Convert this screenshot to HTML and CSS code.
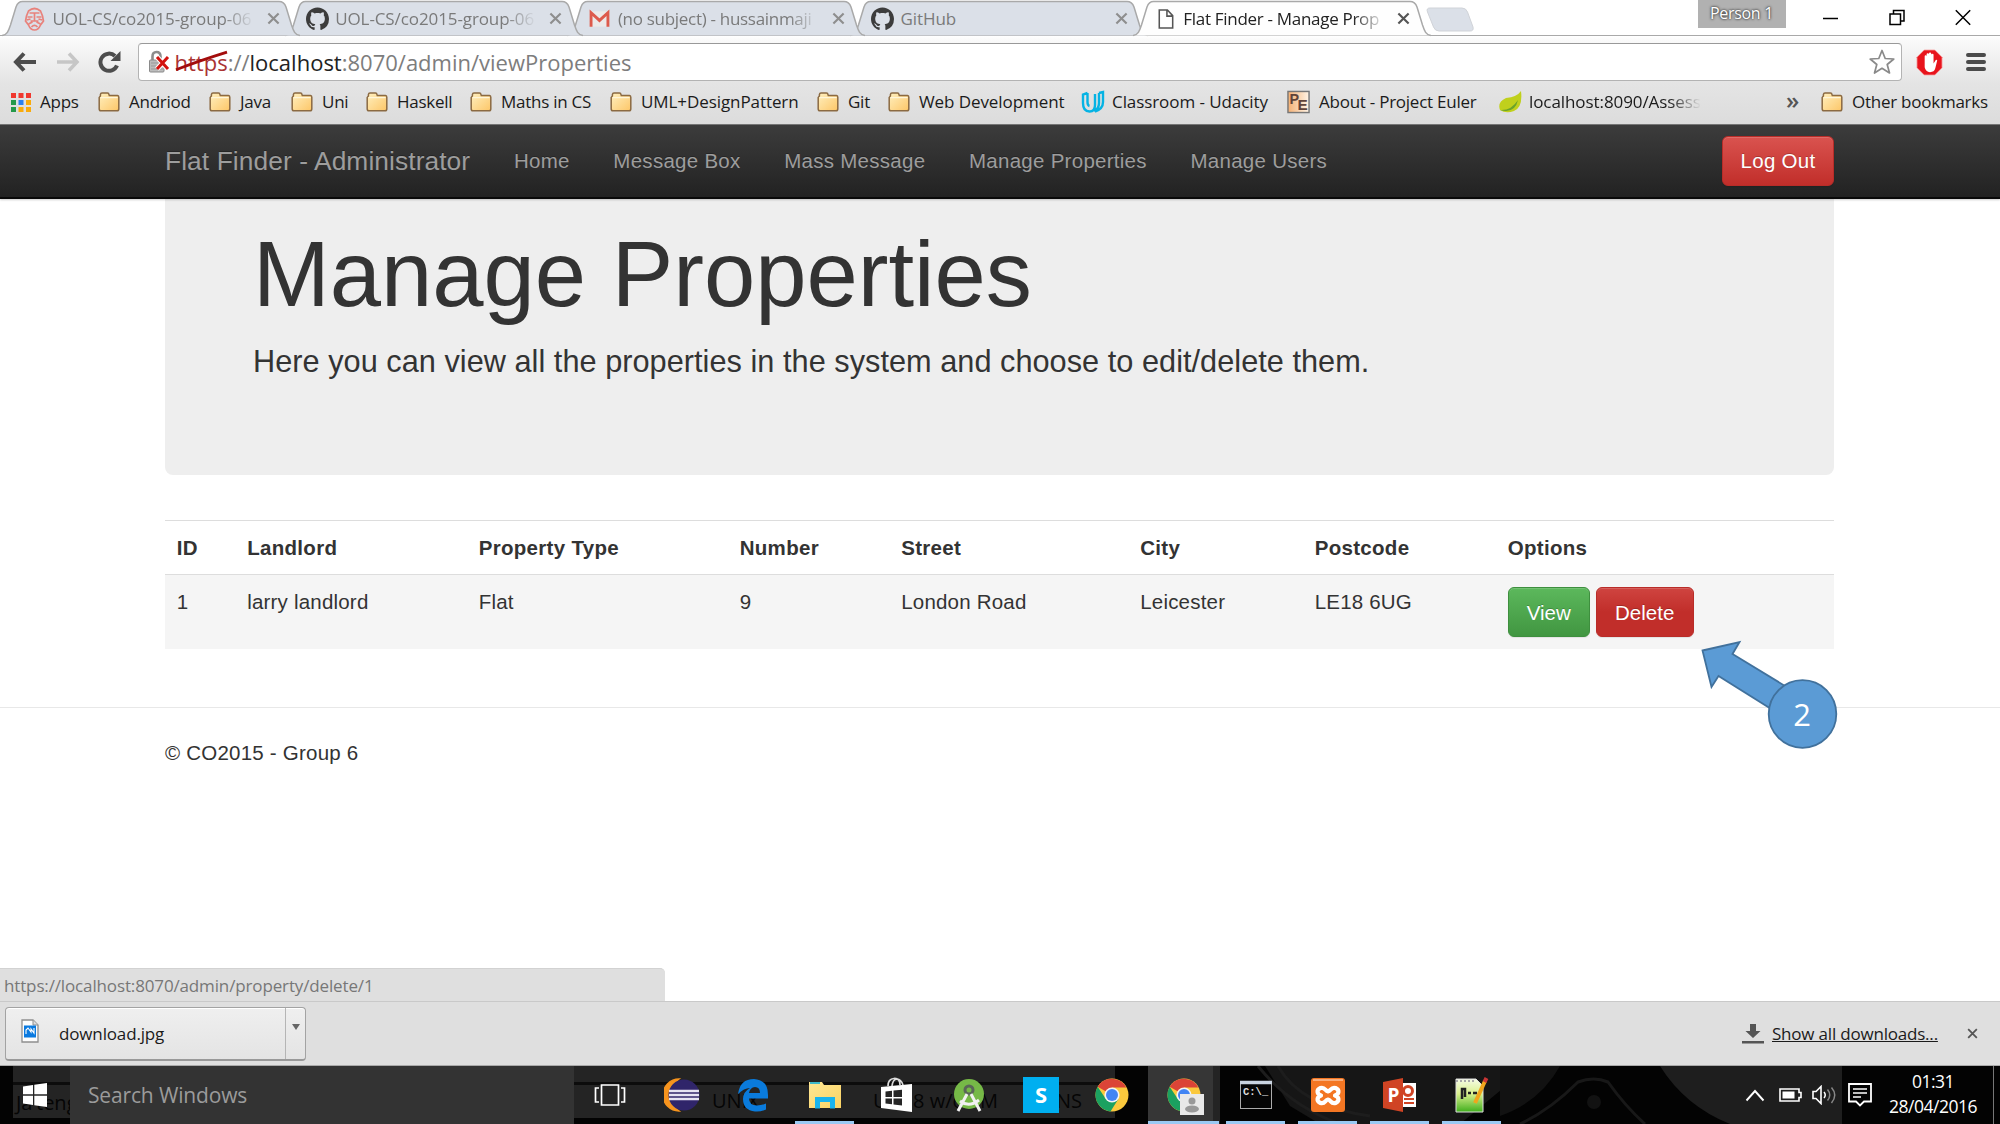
FILE: index.html
```html
<!DOCTYPE html>
<html lang="en">
<head>
<meta charset="utf-8">
<title>Flat Finder - Manage Properties</title>
<link rel="stylesheet" href="styles.css">
</head>
<body>
<svg class="defs" width="0" height="0" aria-hidden="true">
  <defs>
    <linearGradient id="folderFill" x1="0" y1="0" x2="1" y2="1"><stop offset="0" stop-color="#fff0c0"/><stop offset="1" stop-color="#fdc667"/></linearGradient>
    <linearGradient id="peFill" x1="0" y1="0" x2="1" y2="0"><stop offset="0" stop-color="#f4b074"/><stop offset="1" stop-color="#fff4e6"/></linearGradient>
    <linearGradient id="nppFill" x1="0" y1="0" x2="0" y2="1"><stop offset="0" stop-color="#f6fbe6"/><stop offset="0.45" stop-color="#d9f08c"/><stop offset="1" stop-color="#3fae1c"/></linearGradient>
    <linearGradient id="explFill" x1="0" y1="0" x2="1" y2="1"><stop offset="0" stop-color="#ffe794"/><stop offset="1" stop-color="#fbd363"/></linearGradient>
    <symbol id="folder" viewBox="0 0 22 20"><path d="M1.2 17V5.5L2.4 4V2.6Q2.6 1 4 1H9.5Q10.8 1 11 2.6L11.3 3.6H19.5Q20.8 3.8 20.8 5.3V17Q20.8 18.8 19 18.8H3Q1.2 18.8 1.2 17Z" fill="url(#folderFill)" stroke="#8b6a42" stroke-width="1.5"/><path d="M2.4 5.6H19.6" stroke="#fff6da" stroke-width="1.2"/></symbol>
    <symbol id="cat" viewBox="0 0 16 16"><path fill-rule="evenodd" fill="#3c3c3c" d="M8 0C3.58 0 0 3.58 0 8c0 3.54 2.29 6.53 5.47 7.59.4.07.55-.17.55-.38 0-.19-.01-.82-.01-1.49-2.01.37-2.53-.49-2.69-.94-.09-.23-.48-.94-.82-1.13-.28-.15-.68-.52-.01-.53.63-.01 1.08.58 1.23.82.72 1.21 1.87.87 2.33.66.07-.52.28-.87.51-1.07-1.78-.2-3.64-.89-3.64-3.95 0-.87.31-1.59.82-2.15-.08-.2-.36-1.02.08-2.12 0 0 .67-.21 2.2.82.64-.18 1.32-.27 2-.27s1.36.09 2 .27c1.53-1.04 2.2-.82 2.2-.82.44 1.1.16 1.92.08 2.12.51.56.82 1.27.82 2.15 0 3.07-1.87 3.75-3.65 3.95.29.25.54.73.54 1.48 0 1.07-.01 1.93-.01 2.2 0 .21.15.46.55.38A8.01 8.01 0 0 0 16 8c0-4.42-3.58-8-8-8z"/></symbol>
    <symbol id="cross" viewBox="0 0 14 14"><path d="M1.5 1.5 12.5 12.5M12.5 1.5 1.5 12.5" fill="none" stroke="currentColor" stroke-width="2.3"/></symbol>
    <symbol id="tabshape" viewBox="0 0 298 37"><path d="M0 35.5C5 35 6.500 31 8.500 25L14 7Q16 1.500 20.500 1.500H277Q282 1.500 284 7L289.500 25C291.500 31 293 35 298 35.500" stroke="#a9a9a9" stroke-width="1.500"/></symbol>
    <symbol id="chrome" viewBox="0 0 34 34"><circle cx="17" cy="17" r="16.500" fill="#fbc93d"/><path d="M17 17 2.700 8.700A16.500 16.500 0 0 1 31.300 9.500H17Z" fill="#db4437"/><path d="M2.700 8.700A16.500 16.500 0 0 0 15.500 33.400L23.500 20.800 17 17 10.500 20.500Z" fill="#1ba160"/><circle cx="17" cy="17" r="7.600" fill="#f4f4f4"/><circle cx="17" cy="17" r="6" fill="#4285f4"/></symbol>
  </defs>
</svg>

<header class="chrome">
  <div class="tabstrip">
    <div class="tab t1">
      <svg class="shape"><use href="#tabshape"/></svg>
      <svg class="fav" viewBox="0 0 20 24"><g fill="none" stroke="#e8827c" stroke-width="1.700"><path d="M4 4Q10-1 16 4L18 9 19 14 16 18Q14 23 10 23T4 18L1 14 2 9Z"/><path d="M5 6H15M3 10H8M12 10H17M10 6V14M6 14H14M4 17 8 15M16 17 12 15M7 20Q10 17 13 20M2 13 6 12M18 13 14 12"/></g></svg>
      <span class="label fade">UOL-CS/co2015-group-06</span><svg class="x"><use href="#cross"/></svg>
    </div>
    <div class="tab t2">
      <svg class="shape"><use href="#tabshape"/></svg>
      <svg class="fav"><use href="#cat"/></svg>
      <span class="label fade">UOL-CS/co2015-group-06</span><svg class="x"><use href="#cross"/></svg>
    </div>
    <div class="tab t3">
      <svg class="shape"><use href="#tabshape"/></svg>
      <svg class="fav" viewBox="0 0 24 24"><path d="M2 4H22V20H2Z" fill="#ece9e9"/><path d="M3.200 20V5.500L12 13.500 20.800 5.500V20" fill="none" stroke="#dd5a4c" stroke-width="3"/></svg>
      <span class="label fade">(no subject) - hussainmaji</span><svg class="x"><use href="#cross"/></svg>
    </div>
    <div class="tab t4">
      <svg class="shape"><use href="#tabshape"/></svg>
      <svg class="fav"><use href="#cat"/></svg>
      <span class="label">GitHub</span><svg class="x"><use href="#cross"/></svg>
    </div>
    <div class="tab t5 active">
      <svg class="shape"><use href="#tabshape"/></svg>
      <svg class="fav" viewBox="0 0 24 24"><path d="M5.500 2.500H14L19.500 8.500V21.500H5.500ZM13.500 2.500V9H19.500" fill="#fff" stroke="#555" stroke-width="1.600"/></svg>
      <span class="label fade">Flat Finder - Manage Prop</span><svg class="x"><use href="#cross"/></svg>
    </div>
    <svg class="newtab" viewBox="0 0 49 25"><path d="M4 1H36Q40 1 41.500 5L47 20Q48 24 44 24H13Q9 24 7.500 20L1.500 5Q0 1 4 1Z" fill="#dbe0e8" stroke="#d0d3d8"/></svg>
    <div class="person">Person 1</div>
    <div class="wincontrols">
      <svg viewBox="0 0 16 16"><path d="M0 9H15" stroke="#000" stroke-width="1.500"/></svg>
      <svg viewBox="0 0 16 16"><path d="M1 4.500H11.500V15H1ZM4.500 4V1H15V11.500H12" fill="none" stroke="#000" stroke-width="1.500"/></svg>
      <svg viewBox="0 0 16 16"><path d="M.8.8 15.200 15.200M15.200.8.8 15.200" stroke="#000" stroke-width="1.500"/></svg>
    </div>
  </div>

  <div class="toolbar">
    <svg class="nav-ic" viewBox="0 0 24 22"><path d="M23 11H4M11 2.500 3 11 11 19.500" fill="none" stroke="#4d4d4d" stroke-width="4"/></svg>
    <svg class="nav-ic off" viewBox="0 0 24 22"><path d="M1 11H20M13 2.500 21 11 13 19.500" fill="none" stroke="#c6c6c6" stroke-width="3.500"/></svg>
    <svg class="nav-ic" viewBox="0 0 24 22"><path d="M19 14.500A8.600 8.600 0 1 1 17 5" fill="none" stroke="#4d4d4d" stroke-width="4"/><path d="M22.500 0V10H12.500Z" fill="#4d4d4d"/></svg>
    <div class="omnibox">
      <svg class="lock" viewBox="0 0 22 24"><path d="M4.500 11V6.500Q4.500 2 8.500 2T12.500 6.500V11" fill="none" stroke="#8c8c8c" stroke-width="2.600"/><rect x="1.500" y="10" width="14.500" height="12" rx="1" fill="#bcbcbc" stroke="#8a8a8a"/><path d="M3 13H15M3 16H15M3 19H15" stroke="#999"/><path d="M9 7 20 19M20 7 9 19" stroke="#fff" stroke-width="5"/><path d="M9 7 20 19M20 7 9 19" stroke="#d2120e" stroke-width="3"/></svg>
      <span class="url"><span class="scheme">https<svg viewBox="0 0 54 22"><path d="M1 20Q24 11 53 2" fill="none" stroke="#a30c0c" stroke-width="2.800"/></svg></span>://<b>localhost</b>:8070/admin/viewProperties</span>
      <svg class="star" viewBox="0 0 28 28"><path d="M14 2.500 17.200 10.500 25.800 11 19.200 16.500 21.500 25 14 20.300 6.500 25 8.800 16.500 2.200 11 10.800 10.500Z" fill="#fff" stroke="#8a8a8a" stroke-width="1.700" stroke-linejoin="round"/></svg>
    </div>
    <svg class="abp" viewBox="0 0 28 28"><path d="M8.500 1H19.500L27 8.500V19.500L19.500 27H8.500L1 19.500V8.500Z" fill="#e8141c" stroke="#f7a5a5" stroke-width=".8"/><path d="M9 13V7.500Q9 6.500 10 6.500T11 7.500V5.500Q11 4.300 12.200 4.300T13.400 5.500V4.800Q13.400 3.500 14.600 3.500T15.800 4.800V6Q15.800 5 17 5T18.200 6V15L20.500 11.500Q21.800 10.500 22 12L20 20Q19 24 14.500 24T9 19Z" fill="#fff"/></svg>
    <svg class="burger" viewBox="0 0 20 20"><path d="M2 3H18M2 10H18M2 17H18" stroke="#4b4b4b" stroke-width="4" stroke-linecap="round"/></svg>
  </div>

  <div class="bookmarks">
    <div class="bm"><svg viewBox="0 0 20 20" width="20" height="20"><path d="M0 1H5V6H0ZM7.500 1H12.500V6H7.500ZM15 1H20V6H15Z" fill="#f0372e"/><path d="M0 8H5V13H0ZM0 15H5V20H0Z" fill="#24994a"/><path d="M7.500 8H12.500V13H7.500Z" fill="#2a80f0"/><path d="M15 8H20V13H15ZM7.500 15H12.500V20H7.500ZM15 15H20V20H15Z" fill="#f9ab0c"/></svg><span>Apps</span></div>
    <div class="bm"><svg class="fold"><use href="#folder"/></svg><span>Andriod</span></div>
    <div class="bm"><svg class="fold"><use href="#folder"/></svg><span>Java</span></div>
    <div class="bm"><svg class="fold"><use href="#folder"/></svg><span>Uni</span></div>
    <div class="bm"><svg class="fold"><use href="#folder"/></svg><span>Haskell</span></div>
    <div class="bm"><svg class="fold"><use href="#folder"/></svg><span>Maths in CS</span></div>
    <div class="bm wide"><svg class="fold"><use href="#folder"/></svg><span>UML+DesignPattern</span></div>
    <div class="bm"><svg class="fold"><use href="#folder"/></svg><span>Git</span></div>
    <div class="bm wide"><svg class="fold"><use href="#folder"/></svg><span>Web Development</span></div>
    <div class="bm tight wide"><svg viewBox="0 0 24 24" width="24" height="24"><path d="M6.500 3 2 4.500V13Q2 21.500 8.500 21.500 14 21.500 14 15V4M6.500 3V12Q6.500 15.500 8.500 16M18 3V13Q18 19 13 20.500M18 3 22 2V12Q22 19 14 21.500" fill="none" stroke="#05b3e4" stroke-width="2.400"/></svg><span>Classroom - Udacity</span></div>
    <div class="bm"><svg viewBox="0 0 24 24" width="23" height="24"><rect x="1" y="1" width="22" height="22" fill="url(#peFill)" stroke="#777" stroke-width="1.500"/><text x="2.500" y="14.500" font-family="Liberation Sans, sans-serif" font-weight="700" font-size="15" fill="#60443a">P</text><text x="11" y="20.500" font-family="Liberation Sans, sans-serif" font-weight="700" font-size="16" fill="#60443a">E</text></svg><span>About - Project Euler</span></div>
    <div class="bm tight wide"><svg viewBox="0 0 24 24" width="24" height="24"><path d="M23 1Q25 17 16 21 8 24 2 20 -1 12 8 8 19 7 23 1Z" fill="#c0d01c"/><path d="M2 20Q13 21 20 10 17 24 2 20Z" fill="#6aa32a"/></svg><span class="fade">localhost:8090/Assess</span></div>
    <div class="more">»</div>
    <div class="bm other"><svg class="fold"><use href="#folder"/></svg><span>Other bookmarks</span></div>
  </div>
</header>

<main class="page">
  <nav class="navbar">
    <div class="container">
      <a class="brand">Flat Finder - Administrator</a>
      <a>Home</a><a>Message Box</a><a>Mass Message</a><a>Manage Properties</a><a>Manage Users</a>
      <a class="btn danger logout">Log Out</a>
    </div>
  </nav>
  <section class="jumbotron container">
    <h1>Manage Properties</h1>
    <p>Here you can view all the properties in the system and choose to edit/delete them.</p>
  </section>
  <table class="container listing">
    <colgroup><col class="c1"><col class="c2"><col class="c3"><col class="c4"><col class="c5"><col class="c6"><col class="c7"><col></colgroup>
    <thead><tr><th>ID</th><th>Landlord</th><th>Property Type</th><th>Number</th><th>Street</th><th>City</th><th>Postcode</th><th>Options</th></tr></thead>
    <tbody><tr><td>1</td><td>larry landlord</td><td>Flat</td><td>9</td><td>London Road</td><td>Leicester</td><td>LE18 6UG</td>
      <td><div class="actions"><a class="btn success">View</a><a class="btn danger hover">Delete</a></div></td></tr></tbody>
  </table>
  <footer><div class="container">© CO2015 - Group 6</div></footer>
  <svg class="callout" viewBox="0 0 140 110"><path d="M2.500 10.500 39.500 2 32.500 14 90 49 76 72 18.500 36 11.500 47Z" fill="#5b9bd5" stroke="#41719c" stroke-width="1.800"/><circle cx="102.500" cy="74" r="33.800" fill="#5b9bd5" stroke="#41719c" stroke-width="1.800"/><text x="102" y="86" text-anchor="middle" class="num">2</text></svg>
  <div class="status">https://localhost:8070/admin/property/delete/1</div>
</main>

<div class="shelf">
  <div class="dl">
    <div class="file"><svg viewBox="0 0 18 24" width="18" height="24"><path d="M1 1H12L17 6V23H1Z" fill="#fdfdfd" stroke="#8f8f8f" stroke-width="1.300"/><path d="M12 1V6H17" fill="#ddd" stroke="#8f8f8f"/><rect x="3" y="6.500" width="12" height="12" fill="#0a7ae0"/><path d="M5 15V11L7 9 10 13V10L13 14V9" fill="none" stroke="#fff" stroke-width="1.100"/></svg><span>download.jpg</span></div>
    <div class="drop"><svg viewBox="0 0 8 6" width="8" height="6"><path d="M0 0H8L4 6Z" fill="#666"/></svg></div>
  </div>
  <svg class="arrow" viewBox="0 0 22 20" width="22" height="20"><path d="M8 0H14V7H18.500L11 14 3.500 7H8ZM0 17H22V19.500H0Z" fill="#555"/></svg>
  <a class="all">Show all downloads...</a>
  <svg class="x"><use href="#cross"/></svg>
</div>

<div class="taskbar">
  <svg class="backdrop" viewBox="0 0 2000 58">
    <rect width="2000" height="58" fill="#030303"/>
    <rect x="13" width="1102" height="52" fill="#242424"/><rect x="13" y="16" width="1102" height="3" fill="#0c0c0c"/>
    <path d="M1265 0H1530L1460 58H1320L1290 40Z" fill="#161616"/><path d="M1258 0Q1290 40 1340 58M1278 0Q1300 40 1370 50" fill="none" stroke="#1d1d1d" stroke-width="3"/>
    <path d="M1660 0H1842V58H1730Q1685 40 1660 0Z" fill="#1e1e1e"/><path d="M1500 0H1560Q1540 36 1500 50Z" fill="#121212"/><path d="M1520 58Q1550 44 1578 16 1594 10 1608 16 1625 40 1645 58" fill="none" stroke="#181818" stroke-width="3"/><circle cx="1594" cy="36" r="7" fill="#121212"/>
    <g class="ghost"><text x="16" y="44">Ja</text><text x="36" y="44">teng</text><text x="712" y="42">UNIX</text><text x="873" y="42">U</text><text x="913" y="42">8 w/o</text><text x="980" y="42">M</text><text x="1056" y="42">NS</text></g>
  </svg>
  <div class="start"><svg viewBox="0 0 24 24" width="24" height="24"><path d="M0 3.500 10 2V11.300H0ZM11.300 1.800 24 0V11.300H11.300ZM0 12.700H10V22L0 20.500ZM11.300 12.700H24V24L11.300 22.200Z" fill="#fff"/></svg></div>
  <div class="search">Search Windows</div>
  <div class="apps">
    <div class="app"><svg viewBox="0 0 36 36"><path d="M9.500 8H26.500V28H9.500ZM7 11H3.500V25H7M29 11H32.500V25H29" fill="none" stroke="#fff" stroke-width="1.700"/></svg></div>
    <div class="app"><svg viewBox="0 0 36 36"><path d="M15 2A16 16 0 0 0 15 34 20 20 0 0 1 15 2Z" fill="#f7941e" stroke="#f7941e" stroke-width="1.500"/><circle cx="20" cy="18" r="15.500" fill="#30256a"/><path d="M5 14H35M5 18H35M5 22H35" stroke="#e6e3f2" stroke-width="2.300"/></svg></div>
    <div class="app"><svg viewBox="0 0 36 36"><path d="M3 17Q5 2 19 2 33 3 33 18V21.500H14Q14 28 22 28.500 27 28.500 31 26.500V32.500Q26 35 20 34.500 8 33 8 22 8 15 15 11 9 11 3 17ZM14 16H25Q25 10 20 10 15 10.500 14 16Z" fill="#0a7bdc" fill-rule="evenodd"/></svg></div>
    <div class="app run"><svg viewBox="0 0 36 36"><path d="M2 5H15L17 8H34V31H2Z" fill="url(#explFill)"/><path d="M3 6H13" stroke="#3fb9c9" stroke-width="2"/><path d="M8 20H28V31.500H23V25H13V31.500H8Z" fill="#19b4ee"/></svg></div>
    <div class="app"><svg viewBox="0 0 36 36"><path d="M2 10 33 7V35L2 31Z" fill="#fff"/><path d="M9 9Q9 2 15 1.500T21 8M13 9Q14 2 18 2T24 8" fill="none" stroke="#ddd" stroke-width="1.700"/><path d="M6.500 14.500 13 13.800V20H6.500ZM14.500 13.600 23 12.700V20H14.500ZM6.500 21.500H13V27.300L6.500 26.600ZM14.500 21.500H23V28.500L14.500 27.500Z" fill="#252525"/></svg></div>
    <div class="app"><svg viewBox="0 0 36 36"><circle cx="18" cy="17" r="15" fill="#76b947"/><circle cx="18" cy="13" r="4" fill="none" stroke="#5a6658" stroke-width="3"/><path d="M16 17 7 34M20 17 29 34M9 24Q18 31 28 23" fill="none" stroke="#f1f1f1" stroke-width="3"/></svg></div>
    <div class="app"><svg viewBox="0 0 36 36"><rect width="36" height="36" fill="#00aff0"/><text x="18" y="26" text-anchor="middle" font-family="Open Sans, sans-serif" font-weight="700" font-size="22" fill="#fff">S</text></svg></div>
    <div class="app"><svg viewBox="-1 -1 36 36"><use href="#chrome" width="34" height="34"/></svg></div>
    <div class="app run current"><svg viewBox="-1 -1 36 36"><use href="#chrome" width="34" height="34"/></svg><svg class="badge" viewBox="0 0 24 21"><rect width="24" height="21" fill="#e9e9e9"/><circle cx="12" cy="7" r="3.500" fill="#999"/><ellipse cx="12" cy="15" rx="7" ry="3.500" fill="#999"/></svg></div>
    <div class="app run"><svg viewBox="0 0 36 36"><rect x="2.500" y="4.500" width="31" height="27" fill="#050505" stroke="#ababab"/><path d="M2 5.500H34" stroke="#c9d3e0" stroke-width="3.500"/><text x="5" y="18" font-family="Liberation Mono, monospace" font-weight="700" font-size="10.500" fill="#ddd">C:\_</text></svg></div>
    <div class="app run"><svg viewBox="0 0 36 36"><rect x="1" y="1" width="34" height="34" rx="3" fill="#f37623"/><path d="M3 3H33" stroke="#f8ad7b" stroke-width="2"/><path d="M10.500 11C6 13 7 17 11 18.500 7 20 6 24 10.500 26 15 27.500 15 23 18 22.500 21 23 21 27.500 25.500 26 30 24 29 20 25 18.500 29 17 30 13 25.500 11 21 9.500 21 14 18 14.500 15 14 15 9.500 10.500 11Z" fill="none" stroke="#fff" stroke-width="4.200" stroke-linejoin="round"/></svg></div>
    <div class="app run"><svg viewBox="0 0 36 36"><rect x="18" y="6" width="16" height="24" fill="#fff"/><path d="M22 22H32M22 26H32" stroke="#d04424" stroke-width="2"/><circle cx="26" cy="14" r="4.500" fill="none" stroke="#d04424" stroke-width="3"/><path d="M1 5 21 1V35L1 31Z" fill="#d04424"/><text x="5.500" y="25" font-family="Open Sans, sans-serif" font-weight="700" font-size="19" fill="#fff">P</text></svg></div>
    <div class="app run"><svg viewBox="0 0 36 36"><path d="M3 2H23L30 9V35H3Z" fill="url(#nppFill)" stroke="#ddd"/><path d="M3 4H22" stroke="#aaa" stroke-width="2" stroke-dasharray="2 2"/><path d="M9 22V12H12V20M15 16H18M20 16H24" fill="none" stroke="#222" stroke-width="2.500"/><path d="M32 4 22 26" stroke="#f0a51c" stroke-width="4"/><path d="M33.500 1 31.500 5" stroke="#c93535" stroke-width="4"/></svg></div>
  </div>
  <div class="tray">
    <svg width="20" height="14" viewBox="0 0 20 14"><path d="M1.500 12.500 10 3 18.500 12.500" fill="none" stroke="#fff" stroke-width="1.900"/></svg>
    <svg class="batt" width="23" height="14" viewBox="0 0 23 14"><path d="M1 1H20V4.500H22V9.500H20V13H1Z" fill="none" stroke="#fff" stroke-width="1.600"/><rect x="3.500" y="3.500" width="12" height="7" fill="#fff"/></svg>
    <svg class="vol" width="26" height="20" viewBox="0 0 26 20"><path d="M1 6.500H4L9 1.500V18.500L4 13.500H1Z" fill="none" stroke="#fff" stroke-width="1.600"/><path d="M12 7Q14.500 10 12 13" fill="none" stroke="#fff" stroke-width="1.500"/><path d="M15.500 4.500Q20 10 15.500 15.500M19.500 2.500Q26 10 19.500 18" fill="none" stroke="#888" stroke-width="1.500"/></svg>
    <svg class="note" width="24" height="24" viewBox="0 0 24 24"><path d="M1 1H23V18.500H16L12 22.500 8 18.500H1Z" fill="none" stroke="#fff" stroke-width="1.800"/><path d="M5 6H19M5 10H19M5 14H13" stroke="#fff" stroke-width="1.500"/></svg>
    <div class="clock"><span>01:31</span><span>28/04/2016</span></div>
    <div class="peek"></div>
  </div>
</div>
</body>
</html>
```
FILE: styles.css
```css
* { box-sizing: border-box; }
body {
  margin: 0;
  width: 2000px;
  height: 1124px;
  overflow: hidden;
  display: flex;
  flex-direction: column;
  background: #fff;
  font-family: "Open Sans", "Noto Sans", sans-serif;
  font-size: 17px;
  color: #1b1b1b;
}
svg { display: block; flex: none; }
.defs { position: absolute; }
.fade {
  -webkit-mask-image: linear-gradient(90deg, #000 calc(100% - 32px), transparent);
  mask-image: linear-gradient(90deg, #000 calc(100% - 32px), transparent);
}

/* Browser window */
.chrome { height: 125px; flex: none; display: flex; flex-direction: column; background: linear-gradient(#fff 36px, #fafafa 40px, #e4e4e4 84px, #dcdcdc 124px); border-bottom: 1.500px solid #777; }
.tabstrip { height: 36px; display: flex; align-items: flex-start; padding-left: 2px; background: #fff; border-bottom: 1px solid #a9a9a9; isolation: isolate; }
.tab { position: relative; width: 298px; height: 37px; margin-right: -15.300px; flex: none; display: flex; align-items: center; padding: 0 19px 0 21px; color: #7a7a7a; }
.tab .shape { position: absolute; inset: 0; width: 298px; height: 37px; fill: #dbe0e8; z-index: -1; }
.tab .fav { width: 23px; height: 24px; margin-right: 6.500px; }
.tab .label { width: 202px; white-space: nowrap; letter-spacing: -.1px; }
.x { width: 13px; height: 13px; color: #8e8e8e; }
.tab .x { margin-left: 12px; }
.t1 { z-index: 4; } .t2 { z-index: 3; } .t3 { z-index: 2; } .t4 { z-index: 1; }
.tab.t3 .label { letter-spacing: -.3px; }
.tab.active { z-index: 9; color: #222; }
.active .label { letter-spacing: -.3px; }
.active .shape { fill: #fefefe; }
.active .x { color: #555; }
.newtab { width: 49px; height: 25px; margin: 7px 0 0 10px; }
.person { width: 88px; height: 28px; margin-left: 223px; background: #b1b1b1; color: #fff; text-align: center; line-height: 27px; font-size: 16px; letter-spacing: -.3px; text-shadow: 0 0 3px #333, 0 0 2px #444; }
.wincontrols { display: flex; gap: 50px; margin: 9px 0 0 37px; }
.wincontrols svg { width: 16px; height: 17px; }

.toolbar { height: 47px; display: flex; align-items: center; padding: 7px 0 2px 13px; }
.nav-ic { width: 24px; height: 22px; margin-right: 18.500px; }
.omnibox { width: 1764px; height: 38px; display: flex; align-items: center; margin-left: -3px; padding: 0 5px 0 9px; border: 1.500px solid #b3b3b3; border-top-color: #999; border-radius: 4px; background: #fff; }
.lock { width: 22px; height: 26px; }
.url { flex: 1; margin-left: 5px; font-size: 22px; letter-spacing: 0; color: #7d7d7d; line-height: 34px; }
.url b { font-weight: 400; color: #222; }
.scheme { position: relative; color: #a33; }
.scheme svg { position: absolute; left: 0; top: 3px; width: 53px; height: 22px; }
.star { width: 28px; height: 28px; }
.abp { width: 27px; height: 27px; margin-left: 14px; }
.burger { width: 20px; height: 20px; margin-left: 23px; }

.bookmarks { flex: 1; display: grid; grid-template-columns: 87px 111px 82px 75px 104px 140px 207px 71px 193px 206px 211px 288px 35px 1fr; align-items: center; padding: 0 0 4px 11px; }
.bm { display: flex; align-items: center; gap: 9px; white-space: nowrap; letter-spacing: -.25px; }
.bm.tight { gap: 7px; }
.bm.wide { letter-spacing: -.08px; }
.fold { width: 22px; height: 20px; }
.more { font-size: 24px; font-weight: 600; color: #555; line-height: 20px; padding-bottom: 4px; }

/* Web page */
.page { flex: 1; position: relative; font-family: "Liberation Sans", Arial, sans-serif; font-size: 20.500px; color: #333; }
.container { width: 1669px; margin-left: 165px; }
.navbar { height: 74px; background: linear-gradient(#3c3c3c, #222); border-bottom: 2px solid #090909; box-shadow: 0 1px 2px rgba(0,0,0,.2); color: #9d9d9d; text-shadow: 0 -1px 0 rgba(0,0,0,.25); position: relative; }
.navbar .container { display: flex; align-items: center; height: 72px; gap: 43.700px; letter-spacing: .27px; }
.navbar .brand { font-size: 26.350px; letter-spacing: .08px; }
.btn { display: inline-flex; align-items: center; justify-content: center; height: 50px; border-radius: 6px; border: 1.500px solid; color: #fff; text-shadow: 0 -1px 0 rgba(0,0,0,.2); box-shadow: inset 0 1px 0 rgba(255,255,255,.15), 0 1px 1px rgba(0,0,0,.075); }
.danger { background: linear-gradient(#d9534f, #c12e2a); border-color: #b92c28; }
.danger.hover { background: linear-gradient(#cf4440, #c12e2a 50%); }
.success { background: linear-gradient(#5cb85c, #419641); border-color: #3e8f3e; width: 82px; }
.hover { width: 98px; }
.logout { width: 112px; margin-left: auto; }
.jumbotron { height: 276px; padding: 25px 88px 0; background: #eee; border-radius: 0 0 8px 8px; }
h1 { margin: 0; font-weight: 500; font-size: 92.200px; line-height: 101px; }
.jumbotron p { margin: 15px 0 0; font-size: 30.700px; line-height: 43px; letter-spacing: .03px; white-space: nowrap; font-weight: 200; }
.listing { margin-top: 45px; table-layout: fixed; border-collapse: collapse; }
.c1 { width: 70.500px; } .c2 { width: 231.500px; } .c3 { width: 261px; } .c4 { width: 161.500px; } .c5 { width: 239px; } .c6 { width: 174.500px; } .c7 { width: 193px; }
th, td { padding: 12px 0 0 11.700px; text-align: left; vertical-align: top; line-height: 29px; border-top: 1.500px solid #ddd; letter-spacing: .2px; }
th { height: 54px; letter-spacing: .3px; }
td { height: 74px; background: #f5f5f5; }
.actions { display: flex; gap: 6px; letter-spacing: 0; }
footer { margin-top: 58px; padding-top: 33px; border-top: 1.500px solid #e8e8e8; line-height: 24px; letter-spacing: .22px; }
.callout { position: absolute; left: 1700px; top: 515px; width: 140px; height: 110px; }
.num { font: 31px "Open Sans", sans-serif; fill: #fff; }
.status { position: absolute; left: 0; bottom: 0; width: 665px; height: 33px; padding-left: 4px; background: #dfdfdf; border-top: 1px solid #d2d2d2; border-radius: 0 5px 0 0; color: #777; font: 17px/33px "Open Sans", sans-serif; letter-spacing: -.14px; }

/* Download shelf */
.shelf { height: 65px; flex: none; display: flex; align-items: center; padding: 0 22px 0 5px; background: #dfdfdf; border-top: 1.500px solid #c9c9c9; border-bottom: 1px solid #aaa; }
.dl { width: 301px; height: 54px; display: flex; border: 1.500px solid #a3a3a3; border-bottom: 2px solid #999; border-radius: 4px; background: linear-gradient(#efefef, #e4e4e4); box-shadow: inset 0 1px 0 #fff; }
.file { flex: 1; display: flex; align-items: center; padding-left: 15px; letter-spacing: -.15px; }
.file svg { margin: -4px 20px 0 0; }
.drop { width: 20px; border-left: 1.500px solid #b5b5b5; display: flex; justify-content: center; padding-top: 16px; }
.arrow { margin-left: auto; }
.all { margin-left: 8px; width: 167px; white-space: nowrap; text-decoration: underline; letter-spacing: -.2px; }
.shelf .x { width: 11px; height: 11px; margin-left: 28px; color: #555; }

/* Taskbar */
.taskbar { height: 58px; flex: none; position: relative; display: flex; isolation: isolate; color: #fff; background: #030303; }
.backdrop { position: absolute; inset: 0; width: 2000px; height: 58px; z-index: -1; }
.ghost { font: 20px "Open Sans", sans-serif; fill: #050505; }
.start { width: 70px; display: flex; align-items: center; padding-left: 23px; }
.search { width: 504px; padding-left: 18px; background: #333; color: #9b9b9b; font-size: 21px; line-height: 58px; letter-spacing: -.15px; }
.apps { display: flex; }
.app { position: relative; width: 71.800px; height: 58px; display: flex; align-items: center; justify-content: center; }
.app svg { width: 36px; height: 36px; }
.app.run::after { content: ""; position: absolute; left: 6px; bottom: 0; width: 59px; height: 3px; background: #9ac9f3; }
.app.current { background: linear-gradient(90deg, #363636 65px, #242424 65px); }
.app.current::after { left: 0; width: 71px; }
.app .badge { position: absolute; left: 32px; top: 28px; width: 24px; height: 21px; }
.tray { margin-left: auto; display: flex; align-items: center; }
.batt { margin-left: 14px; }
.vol { margin-left: 10px; }
.note { margin-left: 10px; }
.clock { display: flex; flex-direction: column; align-items: center; width: 90px; margin-left: 16px; font-size: 17.500px; line-height: 25px; letter-spacing: -.5px; margin-top: -3px; }
.peek { width: 7px; height: 58px; margin-left: 15px; border-left: 1.500px solid #777; }
```
